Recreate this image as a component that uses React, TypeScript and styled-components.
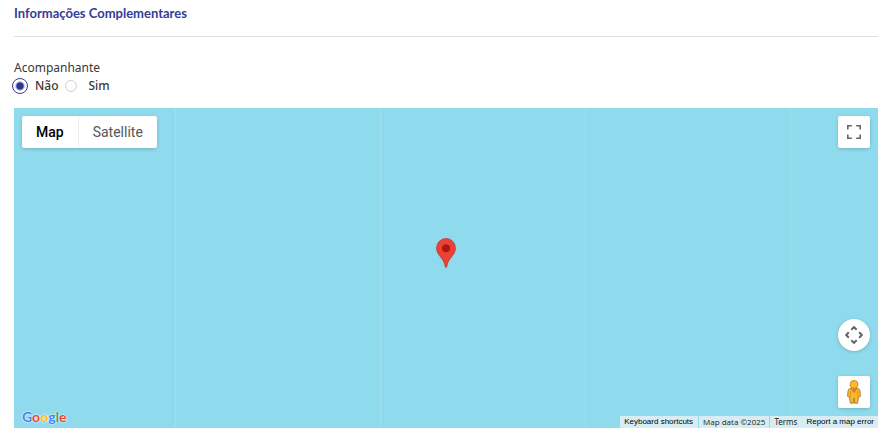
import React, { useState } from "react";
import styled, { createGlobalStyle } from "styled-components";

const GlobalStyle = createGlobalStyle`
  *, *::before, *::after { box-sizing: border-box; }
  body { margin: 0; background: #fff; }
  button, input { font: inherit; margin: 0; }
`;

const Page = styled.main`
  padding: 3px 11px 0 14px;
  font-family: "Noto Sans", sans-serif;
  color: #383838;
`;

const SectionTitle = styled.h2`
  margin: 0;
  padding-bottom: 13px;
  border-bottom: 1px solid #dedede;
  font-family: Lato, sans-serif;
  font-size: 13px;
  font-weight: 700;
  line-height: 20px;
  color: #343d98;
`;

const Companion = styled.fieldset`
  margin: 0;
  padding: 23px 0 12px;
  border: 0;
  min-width: 0;
`;

const Legend = styled.legend`
  float: left;
  width: 100%;
  padding: 0;
  font-size: 12px;
  line-height: 16px;
`;

const Options = styled.div`
  clear: both;
  display: flex;
  align-items: center;
  height: 20px;
  margin-left: -2px;
`;

const Option = styled.label`
  display: flex;
  align-items: center;
  gap: 7px;
  margin-right: 6px;
  font-size: 12px;
  font-weight: 500;
  line-height: 16px;
`;

const Radio = styled.input`
  appearance: none;
  width: 12px;
  height: 12px;
  margin-right: 5px;
  border: 1px solid #d0d0d0;
  border-radius: 50%;
  background: #fff;
  &:checked {
    width: 16px;
    height: 16px;
    margin-right: 0;
    border-color: #343d98;
    background: radial-gradient(circle, #2c3593 0 3px, #fff 5px);
  }
`;

const MapArea = styled.section`
  position: relative;
  display: flex;
  flex-direction: column;
  justify-content: space-between;
  min-height: 320px;
  background: #90daee repeating-linear-gradient(90deg, transparent 0 204px, #9fdfee 204px 205px) -43px 0 / calc(100% + 43px) 100% no-repeat;
`;

const MapTop = styled.div`
  display: flex;
  justify-content: space-between;
  padding: 8px;
`;

const MapTypes = styled.div`
  display: flex;
  height: 32px;
  border-radius: 2px;
  background: #fff;
  box-shadow: 0 1px 4px -1px rgba(0, 0, 0, 0.3);
`;

const MapType = styled.button<{ $active: boolean }>`
  padding: 0 14px 1px;
  border: 0;
  background: transparent;
  font-family: Roboto, sans-serif;
  font-size: 14px;
  line-height: 30px;
  font-weight: ${(p) => (p.$active ? 500 : 400)};
  color: ${(p) => (p.$active ? "#000" : "#565656")};
  & + & { border-left: 1px solid #eee; }
`;

const Control = styled.button<{ $round?: boolean }>`
  display: grid;
  place-items: center;
  width: 32px;
  height: 32px;
  padding: 0;
  border: 0;
  border-radius: ${(p) => (p.$round ? "50%" : "2px")};
  background: #fff;
  box-shadow: 0 1px 4px -1px rgba(0, 0, 0, 0.3);
`;

const Marker = styled.svg`
  position: absolute;
  left: 50%;
  top: 50%;
  transform: translate(-50%, -100%);
`;

const MapBottom = styled.div`
  display: flex;
  flex-direction: column;
`;

const SideControls = styled.div`
  display: flex;
  flex-direction: column;
  align-self: flex-end;
  gap: 25px;
  padding-right: 8px;
`;

const Footer = styled.footer`
  display: flex;
  align-items: flex-end;
  justify-content: space-between;
  height: 20px;
  padding-left: 8px;
`;

const Logo = styled.a`
  align-self: flex-start;
  font-family: Lato, sans-serif;
  font-size: 14px;
  font-weight: 700;
  line-height: 18px;
  text-decoration: none;
  text-shadow: 0 0 1px #fff, 0 0 2px #fff;
`;

const Letter = styled.span<{ $color: string }>`
  color: ${(p) => p.$color};
`;

const Credits = styled.div`
  display: flex;
  gap: 1px;
  height: 12px;
  font-size: 8px;
  line-height: 12px;
  color: #222;
  white-space: nowrap;
`;

const Credit = styled.span`
  padding: 0 4px;
  font-family: "Open Sans", sans-serif;
  background: #d7edf3;
`;

const Shortcuts = styled.button`
  padding: 0 5px 0 4px;
  border: 0;
  background: #d7edf3;
  font-family: "Liberation Sans", Arial, sans-serif;
  font-size: 8px;
  line-height: 12px;
  color: #000;
`;

const Links = styled.nav`
  display: flex;
  gap: 9px;
  padding: 0 4px;
  background: #d7edf3;
`;

const CreditLink = styled.a<{ $plain?: boolean }>`
  color: ${(p) => (p.$plain ? "#000" : "#222")};
  text-decoration: none;
  font-family: ${(p) => (p.$plain ? '"Liberation Sans", Arial, sans-serif' : '"Noto Sans", sans-serif')};
`;

const brand = [
  ["G", "#4285f4"], ["o", "#ea4335"], ["o", "#fbbc05"],
  ["g", "#4285f4"], ["l", "#34a853"], ["e", "#ea4335"],
];

export default function App() {
  const [companion, setCompanion] = useState("nao");
  const [view, setView] = useState("Map");
  return (
    <>
      <GlobalStyle />
      <Page>
        <SectionTitle>Informações Complementares</SectionTitle>
        <Companion>
          <Legend>Acompanhante</Legend>
          <Options>
            <Option>
              <Radio type="radio" name="companion" checked={companion === "nao"} onChange={() => setCompanion("nao")} />
              Não
            </Option>
            <Option>
              <Radio type="radio" name="companion" checked={companion === "sim"} onChange={() => setCompanion("sim")} />
              Sim
            </Option>
          </Options>
        </Companion>
        <MapArea aria-label="Map">
          <MapTop>
            <MapTypes>
              {["Map", "Satellite"].map((name) => (
                <MapType key={name} type="button" $active={view === name} onClick={() => setView(name)}>{name}</MapType>
              ))}
            </MapTypes>
            <Control type="button" aria-label="Toggle fullscreen view">
              <svg width="14" height="14" viewBox="0 0 14 14" fill="none" stroke="#666" strokeWidth="1.6">
                <path d="M.8 4.6V.8H4.8M9.2 .8H13.2V4.6M13.2 9.4V13.2H9.2M4.8 13.2H.8V9.4" />
              </svg>
            </Control>
          </MapTop>
          <Marker width="20" height="30" viewBox="0 0 20 30" aria-hidden="true">
            <path d="M10 .5A9.4 9.4 0 0 0 .6 9.9C.6 13 1.8 15.3 3.6 17.7C6.3 21.3 8.5 23.6 9.2 28.3Q9.4 29.5 10 29.5T10.8 28.3C11.5 23.6 13.7 21.3 16.4 17.7C18.2 15.3 19.4 13 19.4 9.9A9.4 9.4 0 0 0 10 .5Z" fill="#ea4335" stroke="#c5352c" strokeWidth=".8" />
            <circle cx="10" cy="10.3" r="4" fill="#b31412" />
          </Marker>
          <MapBottom>
            <SideControls>
              <Control type="button" $round aria-label="Map camera controls">
                <svg width="20" height="20" viewBox="0 0 20 20" fill="none" stroke="#666" strokeWidth="2">
                  <path d="M7.3 4.8L10 2.2L12.7 4.8M7.3 15.2L10 17.8L12.7 15.2M4.8 7.3L2.2 10L4.8 12.7M15.2 7.3L17.8 10L15.2 12.7" />
                </svg>
              </Control>
              <Control type="button" aria-label="Open Street View">
                <svg width="16" height="26" viewBox="0 0 16 26">
                  <path d="M4.2 9.5Q2.2 9.8 2 12L1.6 17Q1.7 18.2 3.5 18L4.4 24.2H7.4L8 19L8.6 24.2H11.6L12.5 18Q14.3 18.2 14.4 17L14 12Q13.8 9.8 11.8 9.5Z" fill="#fbb829" stroke="#a87b35" strokeWidth=".9" />
                  <path d="M4.5 9.4H11.5L8 14.2Z" fill="#e67827" />
                  <path d="M4.4 12V17.8M11.6 12V17.8" stroke="#c58a2b" strokeWidth=".7" />
                  <circle cx="8" cy="5.4" r="4" fill="#fbb829" stroke="#b58a3c" strokeWidth=".9" />
                </svg>
              </Control>
            </SideControls>
            <Footer>
              <Logo href="#google" aria-label="Google">
                {brand.map(([letter, color], i) => <Letter key={i} $color={color}>{letter}</Letter>)}
              </Logo>
              <Credits>
                <Shortcuts type="button">Keyboard shortcuts</Shortcuts>
                <Credit>Map data ©2025</Credit>
                <Links>
                  <CreditLink href="#terms">Terms</CreditLink>
                  <CreditLink href="#report" $plain>Report a map error</CreditLink>
                </Links>
              </Credits>
            </Footer>
          </MapBottom>
        </MapArea>
      </Page>
    </>
  );
}
